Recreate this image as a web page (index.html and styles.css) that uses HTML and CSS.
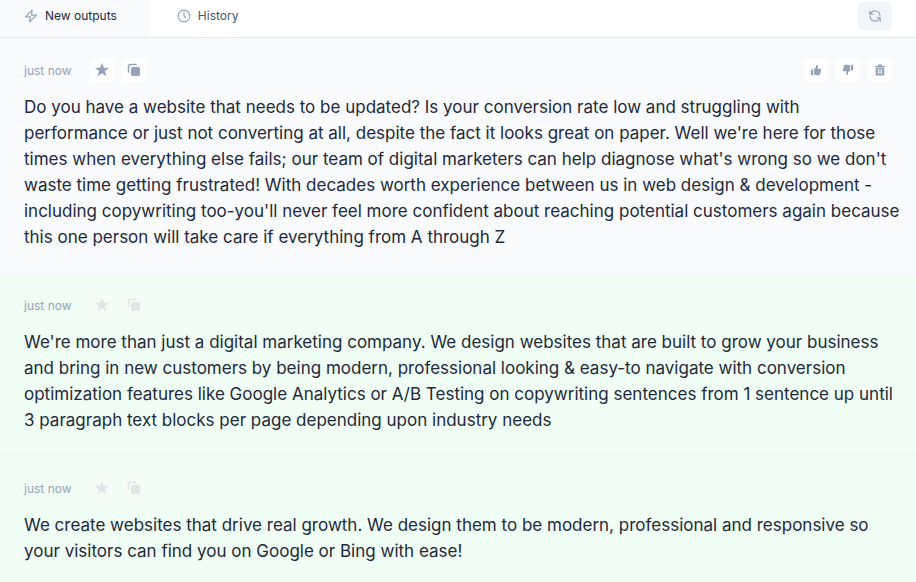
FILE: index.html
```html
<!DOCTYPE html>
<html lang="en">
<head>
  <meta charset="UTF-8">
  <meta name="viewport" content="width=device-width, initial-scale=1">
  <title>New outputs</title>
  <link rel="stylesheet" href="styles.css">
</head>
<body>

<svg class="sprite" aria-hidden="true">
  <symbol id="star" viewBox="0 0 14 14">
    <path d="M7 .6 8.700 5h4.700L9.700 8l1.400 4.700L7 10l-4.100 2.700L4.300 8 .6 5h4.700z" stroke="currentColor" stroke-width=".5" stroke-linejoin="round"/>
  </symbol>
  <symbol id="copy" viewBox="0 0 14 14">
    <rect x="4" y="4" width="9" height="9" rx="2"/>
    <path d="M1.500 9V3a1.500 1.500 0 0 1 1.500-1.500h6" fill="none" stroke="currentColor" stroke-width="1.500" stroke-linecap="round"/>
  </symbol>
  <symbol id="thumb" viewBox="0 0 14 14">
    <path d="M1 6.500h2.600V13H1zM4.600 6.400 7 4.200V2c0-1.300 2.200-1.300 2.200.8L8.800 5.400h3.100c.9 0 1.300.7 1.100 1.500l-1.100 4.800c-.2.8-.7 1.300-1.500 1.300H6.600l-2-1z"/>
  </symbol>
  <symbol id="trash" viewBox="0 0 14 14">
    <path fill-rule="evenodd" d="M4.500.5h5v1.700H13v1.600H1V2.200h3.500zM2 4.400h10v8a1 1 0 0 1-1 1H3a1 1 0 0 1-1-1zm2.700 1.600v5.500h1.500V6zm3.100 0v5.500h1.500V6z"/>
  </symbol>
</svg>

<header class="topbar">
  <nav class="tabs">
    <a class="tab active" href="#new">
      <svg class="line-icon" viewBox="0 0 24 24"><path d="M14 2 2.500 13.500H11L9.500 22 21.500 10.500H13z"/></svg>
      New outputs
    </a>
    <a class="tab" href="#history">
      <svg class="line-icon" viewBox="0 0 24 24"><circle cx="12" cy="12" r="10"/><path d="M12 6v6l3 3"/></svg>
      History
    </a>
  </nav>
  <button class="refresh" type="button" aria-label="Refresh">
    <svg class="line-icon" viewBox="0 0 24 24"><path d="M3 3v6h6M21 21v-6h-6M4 9a8.500 8.500 0 0 1 16.500 3M20 15a8.500 8.500 0 0 1-16.500-3"/></svg>
  </button>
</header>

<main id="new">
  <article class="output">
    <div class="meta">
      <span class="time">just now</span>
      <button class="action" type="button" aria-label="Favorite"><svg><use href="#star"/></svg></button>
      <button class="action" type="button" aria-label="Copy"><svg><use href="#copy"/></svg></button>
      <div class="feedback">
        <button class="action small" type="button" aria-label="Like"><svg><use href="#thumb"/></svg></button>
        <button class="action small down" type="button" aria-label="Dislike"><svg><use href="#thumb"/></svg></button>
        <button class="action small" type="button" aria-label="Delete"><svg><use href="#trash"/></svg></button>
      </div>
    </div>
    <p>Do you have a website that needs to be updated? Is your conversion rate low and struggling with performance or just not converting at all, despite the fact it looks great on paper. Well we're here for those times when everything else fails; our team of digital marketers can help diagnose what's wrong so we don't waste time getting frustrated! With decades worth experience between us in web design &amp; development - including copywriting too-you'll never feel more confident about reaching potential customers again because this one person will take care if everything from A through Z</p>
  </article>

  <article class="output fresh">
    <div class="meta">
      <span class="time">just now</span>
      <button class="action" type="button" aria-label="Favorite"><svg><use href="#star"/></svg></button>
      <button class="action" type="button" aria-label="Copy"><svg><use href="#copy"/></svg></button>
    </div>
    <p>We're more than just a digital marketing company. We design websites that are built to grow your business and bring in new customers by being modern, professional looking &amp; easy-to navigate with conversion optimization features like Google Analytics or A/B Testing on copywriting sentences from 1 sentence up until 3 paragraph text blocks per page depending upon industry needs</p>
  </article>

  <article class="output fresh">
    <div class="meta">
      <span class="time">just now</span>
      <button class="action" type="button" aria-label="Favorite"><svg><use href="#star"/></svg></button>
      <button class="action" type="button" aria-label="Copy"><svg><use href="#copy"/></svg></button>
    </div>
    <p>We create websites that drive real growth. We design them to be modern, professional and responsive so your visitors can find you on Google or Bing with ease!</p>
  </article>
</main>

</body>
</html>
```
FILE: styles.css
```css
* {
  box-sizing: border-box;
}

body {
  margin: 0;
  min-height: 100vh;
  background: #f0fdf4;
  font-family: Inter, sans-serif;
  color: #1e293b;
}

button {
  border: none;
  padding: 0;
  cursor: pointer;
}

svg {
  display: block;
  fill: currentColor;
}

.sprite {
  display: none;
}

.line-icon {
  width: 14px;
  height: 14px;
  fill: none;
  stroke: #94a3b8;
  stroke-width: 2;
  stroke-linecap: round;
  stroke-linejoin: round;
}

.topbar {
  display: flex;
  justify-content: space-between;
  background: #fff;
  border-bottom: 1px solid #e2e8f0;
  padding-right: 24px;
}

.tabs {
  display: flex;
}

.tab {
  display: flex;
  align-items: center;
  gap: 7px;
  height: 37px;
  padding: 0 28px 6px;
  font-size: 12px;
  color: #475569;
  text-decoration: none;
}

.tab.active {
  padding-left: 24px;
  padding-right: 32px;
  background: #f8fafc;
  color: #1e293b;
}

.refresh {
  display: flex;
  align-items: center;
  justify-content: center;
  width: 35px;
  height: 28px;
  margin-top: 2px;
  border-radius: 6px;
  background: #f1f5f9;
}

.output {
  padding: 20px 16px 22px 24px;
  background: #f8fafc;
  border-bottom: 1px solid #f1f5f9;
}

.output.fresh {
  background: #f0fdf4;
  border-color: #edf9f2;
}

.meta {
  display: flex;
  align-items: center;
  gap: 8px;
  margin-bottom: 12px;
  padding-right: 8px;
}

.time {
  margin-right: 10px;
  font-size: 12px;
  color: #94a3b8;
}

.action {
  display: flex;
  align-items: center;
  justify-content: center;
  width: 24px;
  height: 24px;
  border-radius: 4px;
  background: #fff;
  color: #94a3b8;
}

.action svg {
  width: 14px;
  height: 14px;
}

.action.small svg {
  width: 12px;
  height: 12px;
}

.action.down svg {
  transform: rotate(180deg);
}

.fresh .action {
  background: #f3fdf6;
  color: #dbe6e5;
}

.feedback {
  display: flex;
  gap: 8px;
  margin-left: auto;
}

p {
  margin: 0;
  font-size: 17px;
  line-height: 26px;
}
```
